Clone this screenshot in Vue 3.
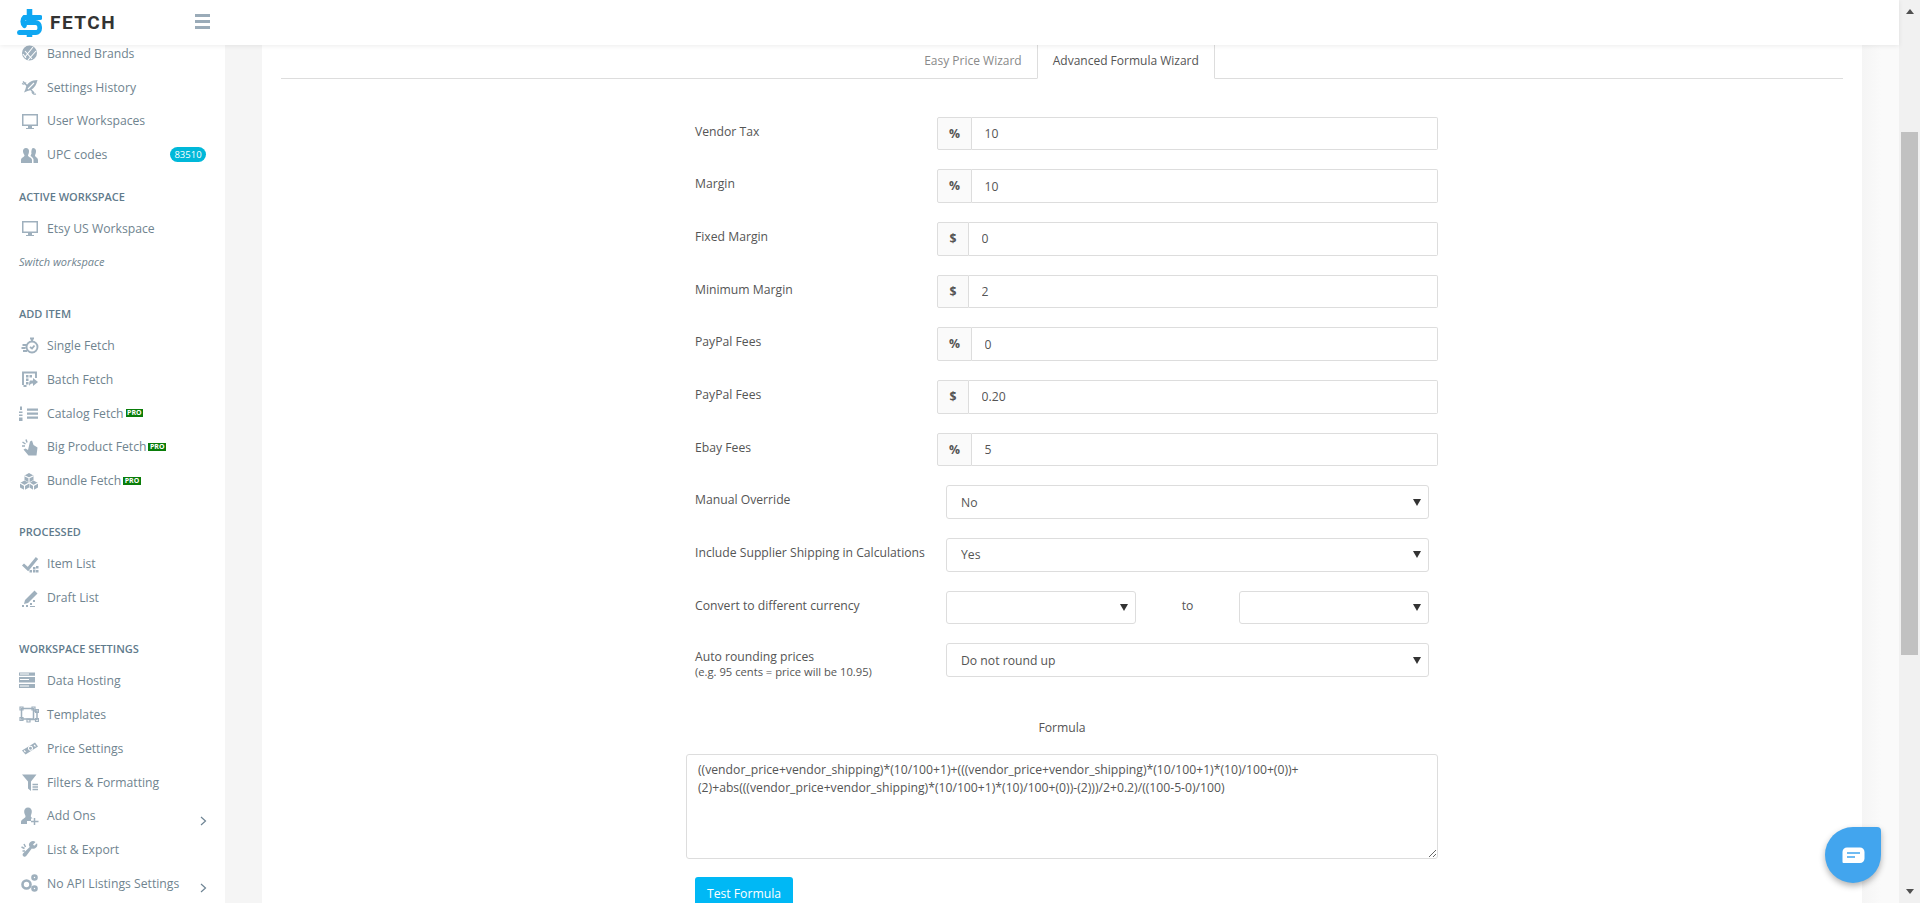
<script setup>
const icons = {
  banned: { f: 'M10.5 2.5a7.5 7.5 0 1 1 0 15a7.5 7.5 0 0 1 0-15z', c: 'M6 14L14 4M9 17L17 8M6 8l7 8M4 11l3 4' },
  history: { f: 'M18.5 3c-6 0-11 3-12 9l-1.5 3.5 3.5-1.5c6-1 9-6 10-11z', s: 'M4 4.500L15 16', s2: 'M3 6.500a3 3 0 0 0 4-1M13 15a3 3 0 0 0 4 2', c: 'M9 12l6-6' },
  monitor: { f: 'M3 3h16v12h-6v2h2v1H7v-1h2v-2H3zM4.500 4.500v9h13v-9z' },
  users: { f: 'M7 3a3 3 0 0 1 3 3.500c0 2-1 3-1 4 0 1.500 4 2 4 4.500V18H2v-3c0-2.500 3.500-3 3.500-4.500 0-1-1.500-2-1.500-4A3 3 0 0 1 7 3zM14 3a3 3 0 0 1 3 3.500c0 2-1 3-1 4 0 1.500 3 2 3 4.500V18h-4.500v-3.500c0-1.500-2-3-3-3.500.5-1 .5-1.500 1-2.500-.5-1 0-5.500 1.500-5.500z' },
  watch: { s4b: 'M13 5.500a5.500 5.500 0 1 1 0 11a5.500 5.500 0 0 1 0-11zM11 2.500h4M13 2.500v3M3.500 9h4M2.500 12h4M4 15h4M11 11l2 1.500 2.500-3' },
  batch: { s4b: 'M4.500 17h3M4 16V3.500h13V9', f: 'M7 6h2.500v2.500H7zM10.500 6H13v2.500h-2.500zM7 9.500h2.500V12H7zM7 13h2.500v2.500H7zM11 11.500h3V9l5 4-5 4v-2.500c-1.500 0-3 .5-4 2.500 0-3 .5-4.500 1-5.500z' },
  list: { f: 'M8 5.500h11v2.300H8zM8 9.500h11v2.300H8zM8 13.500h11v2.300H8zM1 3.500h2v3.500H1zM0 8.500h3.500v1.500H0zM0 11.500h3.500v1.500H0zM0 14.500h3.500V18H0z' },
  hand: { f: 'M11 4.500l2-1 1.500 4.500 4 2.500-1 8H9.500L4.500 12.500l2-1 2.500 1.500z', s: 'M7 2.500l1 3M3.500 5l3 2M3 9h3' },
  cubes: { f: 'M10 2l4.500 2.500v4.500L10 11.500 5.500 9V4.500zM5.500 9.500L10 12v4.500L5.500 19 1 16.500V12zM14.500 9.500L19 12v4.500L14.500 19 10.500 16.500V12z', c: 'M5.500 4.700L10 7l4.500-2.300M10 7v4M1 12l4.500 2.500L10 12M5.500 14.500V19M10.500 12l4 2.500L19 12M14.500 14.500V19' },
  check: { s3: 'M4 10.500l5 4.500L18 4', f: 'M14 13h2.500v2.500H14zM10.500 16h2.500v2.500h-2.500zM14 16h2.500v2.500H14zM17 16h2.500v2.500H17zM17 12h2.500v2.500H17z' },
  pencil: { f: 'M15.500 2.500l3 3L9 15l-4 1 1-4zM3 17h2v2H3zM7 17h2v2H7zM11 15h2v2h-2zM14 12h2v2h-2zM11 18h5v1h-5z' },
  server: { f: 'M0 1.500h16v3.200H0zM0 6h16v5.500H0zM0 13h16v4H0z', c: 'M1 3h9M1 8.500h9M1 15h9' },
  vector: { s: 'M2.500 3.500h12v10.500h-12zM14.500 6H18v8.500h-8V14', s2: 'M1 2h3v3H1zM13 2h3v3h-3zM1 12.500h3v3H1zM8 14h3v3H8zM16.500 13.500h3v3h-3zM16.500 4.500h3v3h-3z' },
  money: { f: 'M3 12.500L16 4.500l3 4L6.500 16.500z', c: 'M12.500 8.500a2 2 0 1 1-3 2a2 2 0 0 1 3-2zM5 12.500l1.500 1.500M15 7l1.500 1.500' },
  filter: { f: 'M3 2.500h14.500l-5.500 7V19l-3-2.500v-7z', s: 'M13.500 12.500h5.500M13.500 15h5.500M13.500 17.500h5.500' },
  userplus: { f: 'M9 1.500a3.800 3.800 0 0 1 3.800 4.300c0 2-1 3-1 4.500 0 1 1.500 1.500 1.700 2.200H12v2.500H8v3H2V16c0-3 4.500-3.500 4.500-5.500 0-1.500-1.500-2.700-1.300-4.700A3.800 3.800 0 0 1 9 1.500z', s: 'M15.500 12v7M12 15.500h7.500' },
  wrench: { f: 'M16.500 2l-2.500 2.500 1.200 1.300L18 3.300a4 4 0 0 1-5.200 5.200L7.200 16a2 2 0 0 1-3-2.700l6.500-6.200A3.900 3.900 0 0 1 16.500 2z', s: 'M5 4l1.500 3M2.500 7l3 1.500M3.500 11h2.500' },
  cogs: { s4: 'M7.500 7.500a4 4 0 1 1 0 8a4 4 0 0 1 0-8zM15.500 2.500a2 2 0 1 1 0 4a2 2 0 0 1 0-4zM15.500 13.500a2 2 0 1 1 0 4a2 2 0 0 1 0-4z' }
}

const sections = [
  { items: [
    { label: 'Banned Brands', icon: 'banned' },
    { label: 'Settings History', icon: 'history' },
    { label: 'User Workspaces', icon: 'monitor' },
    { label: 'UPC codes', icon: 'users', badge: '83510' }
  ] },
  { title: 'ACTIVE WORKSPACE', items: [{ label: 'Etsy US Workspace', icon: 'monitor' }], link: 'Switch workspace' },
  { title: 'ADD ITEM', items: [
    { label: 'Single Fetch', icon: 'watch' },
    { label: 'Batch Fetch', icon: 'batch' },
    { label: 'Catalog Fetch', icon: 'list', pro: true },
    { label: 'Big Product Fetch', icon: 'hand', pro: true },
    { label: 'Bundle Fetch', icon: 'cubes', pro: true }
  ] },
  { title: 'PROCESSED', items: [
    { label: 'Item List', icon: 'check' },
    { label: 'Draft List', icon: 'pencil' }
  ] },
  { title: 'WORKSPACE SETTINGS', items: [
    { label: 'Data Hosting', icon: 'server' },
    { label: 'Templates', icon: 'vector' },
    { label: 'Price Settings', icon: 'money' },
    { label: 'Filters & Formatting', icon: 'filter' },
    { label: 'Add Ons', icon: 'userplus', more: true },
    { label: 'List & Export', icon: 'wrench' },
    { label: 'No API Listings Settings', icon: 'cogs', more: true }
  ] }
]

const fields = [
  { label: 'Vendor Tax', unit: '%', value: '10' },
  { label: 'Margin', unit: '%', value: '10' },
  { label: 'Fixed Margin', unit: '$', value: '0' },
  { label: 'Minimum Margin', unit: '$', value: '2' },
  { label: 'PayPal Fees', unit: '%', value: '0' },
  { label: 'PayPal Fees', unit: '$', value: '0.20' },
  { label: 'Ebay Fees', unit: '%', value: '5' }
]

const formula = '((vendor_price+vendor_shipping)*(10/100+1)+(((vendor_price+vendor_shipping)*(10/100+1)*(10)/100+(0))+(2)+abs(((vendor_price+vendor_shipping)*(10/100+1)*(10)/100+(0))-(2)))/2+0.2)/((100-5-0)/100)'
</script>

<template>
  <div class="page">
    <div class="left">
      <header class="topbar">
        <div class="brand">
          <svg class="logo" width="25" height="28" viewBox="0 0 27 28" preserveAspectRatio="none">
            <path d="M25 8.500H8a5.300 5.300 0 0 0 0 8" fill="none" stroke="#0fa7f2" stroke-width="5" stroke-linecap="round" />
            <path d="M10.500 13.500H20a4.500 4.500 0 0 1 4.500 4.500v1.500a4 4 0 0 1-4 4H2.500" fill="none" stroke="#0fa7f2" stroke-width="5" stroke-linecap="round" />
            <path d="M10.500 0h6v6h-6zM10.500 23h6v5h-6z" fill="#0fa7f2" />
          </svg>
          <span class="brand-name">FETCH</span>
        </div>
        <div class="burger"><i></i><i></i><i></i></div>
      </header>
      <div class="body">
        <aside class="sidebar">
          <div class="menu">
            <section v-for="(sec, i) in sections" :key="i" class="sec">
              <h4 v-if="sec.title">{{ sec.title }}</h4>
              <div v-for="item in sec.items" :key="item.label" class="item">
                <svg class="ico" width="20" height="20" viewBox="0 0 20 20">
                  <path v-if="icons[item.icon].f" :d="icons[item.icon].f" fill="#9fb0bd" fill-rule="evenodd" />
                  <path v-if="icons[item.icon].s" :d="icons[item.icon].s" fill="none" stroke="#9fb0bd" stroke-width="1.500" />
                  <path v-if="icons[item.icon].s2" :d="icons[item.icon].s2" fill="none" stroke="#9fb0bd" stroke-width="1.200" />
                  <path v-if="icons[item.icon].s3" :d="icons[item.icon].s3" fill="none" stroke="#9fb0bd" stroke-width="3" />
                  <path v-if="icons[item.icon].s4" :d="icons[item.icon].s4" fill="none" stroke="#9fb0bd" stroke-width="2.600" />
                  <path v-if="icons[item.icon].s4b" :d="icons[item.icon].s4b" fill="none" stroke="#9fb0bd" stroke-width="1.900" />
                  <path v-if="icons[item.icon].c" :d="icons[item.icon].c" fill="none" stroke="#fff" stroke-width="1.100" />
                </svg>
                <span>{{ item.label }}</span>
                <b v-if="item.pro" class="pro">PRO</b>
                <b v-if="item.badge" class="badge">{{ item.badge }}</b>
                <svg v-if="item.more" class="more" width="7" height="10" viewBox="0 0 7 10">
                  <path d="M1 1l4.500 4L1 9" fill="none" stroke="#6e8494" stroke-width="1.200" />
                </svg>
              </div>
              <p v-if="sec.link" class="switch">{{ sec.link }}</p>
            </section>
          </div>
        </aside>
        <main class="content">
          <div class="card">
            <nav class="tabs">
              <a class="tab">Easy Price Wizard</a>
              <a class="tab active">Advanced Formula Wizard</a>
            </nav>
            <form class="form" @submit.prevent>
              <div v-for="(f, i) in fields" :key="i" class="row">
                <label>{{ f.label }}</label>
                <div class="group">
                  <span class="addon" :class="{ wide: f.unit === '%' }">{{ f.unit }}</span>
                  <input type="text" :value="f.value" />
                </div>
              </div>
              <div class="row">
                <label>Manual Override</label>
                <div class="sel inset"><select><option>No</option><option>Yes</option></select></div>
              </div>
              <div class="row">
                <label>Include Supplier Shipping in Calculations</label>
                <div class="sel inset"><select><option>Yes</option><option>No</option></select></div>
              </div>
              <div class="row">
                <label>Convert to different currency</label>
                <div class="pair inset">
                  <div class="sel"><select><option></option></select></div>
                  <span class="to">to</span>
                  <div class="sel"><select><option></option></select></div>
                </div>
              </div>
              <div class="row">
                <label class="double">Auto rounding prices<small>(e.g. 95 cents = price will be 10.95)</small></label>
                <div class="sel inset"><select><option>Do not round up</option></select></div>
              </div>
              <div class="formula-title">Formula</div>
              <textarea class="formula" :value="formula"></textarea>
              <button class="test" type="button">Test Formula</button>
            </form>
          </div>
        </main>
      </div>
      <button class="chat" type="button" aria-label="Chat">
        <svg width="23" height="17" viewBox="0 0 23 17">
          <path d="M5 .5h13a4.500 4.500 0 0 1 4.500 4.500v6.500a4.500 4.500 0 0 1-4.500 4.500H1.500a1 1 0 0 1-1-1V5A4.500 4.500 0 0 1 5 .5z" fill="#fff" />
          <path d="M5 6h13M5 10h8" stroke="#42a5ee" stroke-width="1.500" />
        </svg>
      </button>
    </div>
    <div class="scrollbar">
      <span class="arrow up"></span>
      <span class="thumb"></span>
      <span class="arrow down"></span>
    </div>
  </div>
</template>

<style>
html, body { margin: 0; overflow: hidden; }
</style>

<style scoped>
.page {
  display: flex;
  width: 1920px;
  height: 903px;
  overflow: hidden;
  font-family: "Open Sans", "Liberation Sans", sans-serif;
  font-size: 12.200px;
  color: #555;
}
.left {
  position: relative;
  display: flex;
  flex-direction: column;
  flex: 1;
  min-width: 0;
}
.topbar {
  position: relative;
  z-index: 2;
  display: flex;
  align-items: center;
  flex: 0 0 45px;
  background: #fff;
  box-shadow: 0 1px 5px rgba(0, 0, 0, 0.08);
}
.brand {
  display: flex;
  align-items: center;
  width: 195px;
  padding-left: 17px;
  box-sizing: border-box;
}
.logo { margin-top: 1px; }
.brand-name {
  margin-left: 8px;
  font-family: Roboto, "Liberation Sans", sans-serif;
  font-weight: 700;
  font-size: 19px;
  letter-spacing: 1.500px;
  color: #333;
}
.burger { display: flex; flex-direction: column; gap: 3px; width: 15px; margin-top: -2px; }
.burger i { display: block; height: 3px; background: #9aabb8; }
.body { display: flex; flex: 1; min-height: 0; }
.sidebar {
  flex: 0 0 225px;
  overflow: hidden;
  background: #fff;
}
.menu { margin-top: -8.500px; }
.sec + .sec { margin-top: 19.500px; }
.sec:nth-child(2) { margin-top: 10px; }
.sec h4 {
  margin: 0;
  height: 30px;
  padding-left: 19px;
  font-size: 11px;
  font-weight: 600;
  line-height: 29px;
  color: #5f7b8c;
}
.item {
  display: flex;
  align-items: center;
  height: 33.750px;
  padding-left: 19px;
  font-size: 12.200px;
  color: #70848f;
}
.ico { flex: none; margin-right: 8px; }
.pro {
  margin-left: 2px;
  padding: 0 1.500px;
  height: 8px;
  font-size: 7px;
  line-height: 8px;
  font-weight: 700;
  color: #fff;
  background: #0a7d0a;
}
.badge {
  margin-left: auto;
  margin-right: 19px;
  width: 36px;
  height: 15px;
  border-radius: 8px;
  font-size: 9.500px;
  font-weight: 400;
  line-height: 15px;
  text-align: center;
  color: #fff;
  background: #00b8d9;
}
.more { margin-left: auto; margin-right: 18px; margin-top: 10px; }
.switch {
  margin: 0;
  height: 34px;
  padding-left: 19px;
  font-size: 11px;
  font-style: italic;
  line-height: 34px;
  color: #70848f;
}
.content {
  flex: 1;
  min-width: 0;
  padding: 0 37px;
  background: linear-gradient(90deg, #f5f5f5 calc(100% - 37px), #fafafa calc(100% - 18px));
}
.card {
  height: 100%;
  padding: 0 19px;
  background: #fff;
}
.tabs {
  display: flex;
  justify-content: center;
  height: 34px;
  box-sizing: border-box;
  border-bottom: 1px solid #ddd;
}
.tab {
  height: 34px;
  box-sizing: border-box;
  padding: 0 15px;
  font-size: 12px;
  line-height: 31px;
  color: #8a8a8a;
}
.tab.active {
  border: 1px solid #ddd;
  border-top: 0;
  border-bottom: 1px solid #fff;
  color: #555;
}
.form {
  width: 752px;
  margin: 37.500px auto 0;
}
.row {
  display: flex;
  height: 33.700px;
  margin-bottom: 19px;
}
.row label {
  flex: 0 0 242px;
  margin-left: 9px;
  line-height: 30px;
}
.row label.double { line-height: 16px; padding-top: 6px; }
.row label small { display: block; font-size: 11.200px; line-height: 14px; }
.group {
  display: flex;
  flex: 1;
  min-width: 0;
}
.addon {
  flex: 0 0 32px;
  box-sizing: border-box;
  border: 1px solid #ddd;
  border-radius: 2px 0 0 2px;
  background: #fafafa;
  font-weight: 700;
  text-align: center;
  line-height: 32px;
}
.addon.wide { flex-basis: 35px; }
.group input {
  flex: 1;
  min-width: 0;
  box-sizing: border-box;
  height: 100%;
  padding: 0 12.500px;
  border: 1px solid #ddd;
  border-left: 0;
  border-radius: 0 2px 2px 0;
  background: #fff;
  font: inherit;
  color: #555;
  outline: none;
}
.inset { flex: 1; min-width: 0; margin: 0 9px; }
.sel { position: relative; }
.sel select {
  display: block;
  width: 100%;
  height: 100%;
  box-sizing: border-box;
  padding: 0 14px;
  border: 1px solid #ddd;
  border-radius: 3px;
  background: #fff;
  font: inherit;
  color: #555;
  appearance: none;
  outline: none;
}
.sel::after {
  content: "";
  position: absolute;
  right: 8.500px;
  top: 50%;
  margin-top: -3.500px;
  border-left: 4px solid transparent;
  border-right: 4px solid transparent;
  border-top: 7px solid #333;
}
.pair { display: flex; }
.pair .sel { flex: 0 0 190px; }
.to { flex: 1; text-align: center; line-height: 30px; }
.formula-title {
  margin-top: 41.500px;
  text-align: center;
  line-height: 18px;
}
.formula {
  display: block;
  width: 100%;
  height: 105px;
  margin-top: 17px;
  box-sizing: border-box;
  padding: 6px 11px;
  border: 1px solid #ddd;
  border-radius: 3px;
  font: inherit;
  line-height: 18px;
  color: #555;
  outline: none;
}
.test {
  display: block;
  width: 98px;
  height: 34px;
  margin: 18px 0 0 9px;
  border: 0;
  border-radius: 3px;
  background: #00b8f5;
  font: inherit;
  color: #fff;
}
.chat {
  position: absolute;
  left: 1825px;
  top: 827px;
  display: flex;
  align-items: center;
  justify-content: center;
  width: 56px;
  height: 56px;
  padding: 0;
  border: 0;
  border-radius: 50% 4px 50% 50%;
  background: #42a5ee;
  box-shadow: 0 3px 6px rgba(0, 0, 0, 0.3);
}
.scrollbar {
  display: flex;
  flex-direction: column;
  align-items: center;
  flex: 0 0 21px;
  background: #f1f1f1;
}
.arrow { width: 0; height: 0; border-left: 4.500px solid transparent; border-right: 4.500px solid transparent; }
.arrow.up { margin-top: 9px; border-bottom: 5px solid #505050; }
.arrow.down { margin-top: auto; margin-bottom: 9px; border-top: 5px solid #505050; }
.thumb { width: 17px; height: 523px; margin-top: 118px; background: #c1c1c1; }
</style>
